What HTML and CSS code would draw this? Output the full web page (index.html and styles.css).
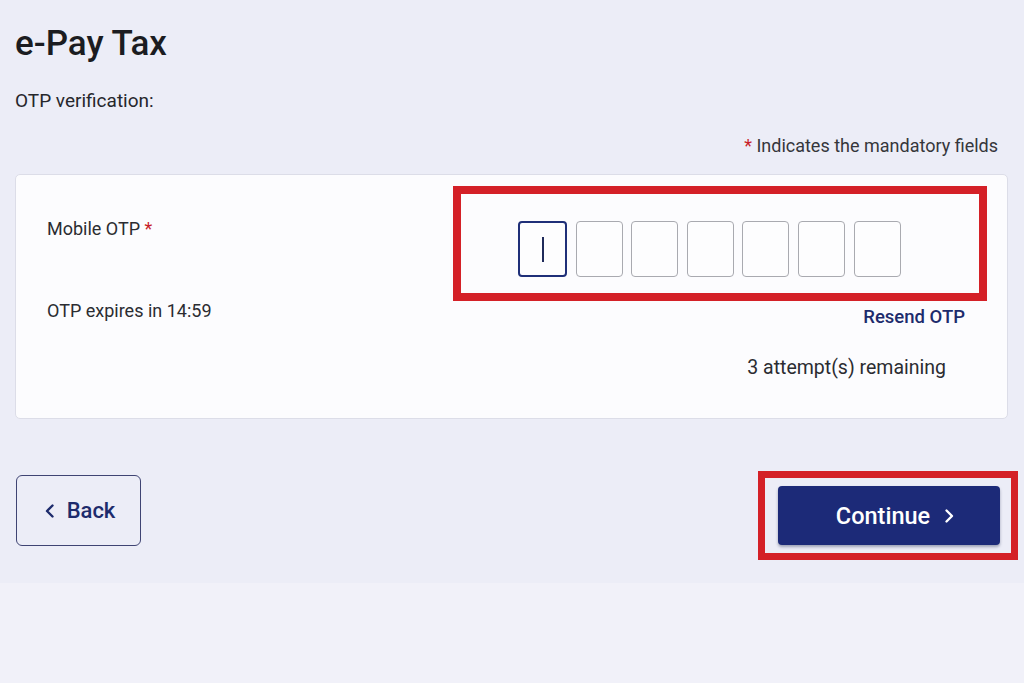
FILE: index.html
```html
<!DOCTYPE html>
<html lang="en">
<head>
<meta charset="utf-8">
<title>e-Pay Tax</title>
<link rel="stylesheet" href="styles.css">
</head>
<body>
<main class="page">
  <h1 class="title">e-Pay Tax</h1>
  <p class="subtitle">OTP verification:</p>
  <p class="mandatory"><span class="req">*</span> Indicates the mandatory fields</p>
  <section class="card">
    <div class="card-left">
      <div class="label">Mobile OTP <span class="req">*</span></div>
      <div class="expiry">OTP expires in 14:59</div>
    </div>
    <div class="card-right">
      <div class="highlight otp-highlight">
        <div class="otp-boxes">
          <div class="otp-box active"><span class="caret"></span></div>
          <div class="otp-box"></div>
          <div class="otp-box"></div>
          <div class="otp-box"></div>
          <div class="otp-box"></div>
          <div class="otp-box"></div>
          <div class="otp-box"></div>
        </div>
      </div>
      <a class="resend" href="#">Resend OTP</a>
      <div class="attempts">3 attempt(s) remaining</div>
    </div>
  </section>
  <div class="actions">
    <button class="btn-back" type="button">
      <svg class="chev" viewBox="0 0 12 16" width="12" height="16"><path d="M8.5 2.5 L3 8 L8.5 13.5" fill="none" stroke="currentColor" stroke-width="2.4" stroke-linecap="round" stroke-linejoin="round"/></svg>
      <span>Back</span>
    </button>
    <div class="highlight cont-highlight">
      <button class="btn-continue" type="button">
        <span>Continue</span>
        <svg class="chev" viewBox="0 0 12 16" width="12" height="16"><path d="M3.5 2.5 L9 8 L3.5 13.5" fill="none" stroke="currentColor" stroke-width="2.4" stroke-linecap="round" stroke-linejoin="round"/></svg>
      </button>
    </div>
  </div>
</main>
</body>
</html>
```

FILE: styles.css
```css
* { box-sizing: border-box; }
html, body { margin: 0; padding: 0; }
body {
  background: #f1f1f9;
  font-family: Roboto, "Liberation Sans", sans-serif;
  color: #2a2b30;
}
.page {
  background: #ecedf7;
  height: 583px;
  padding: 24px 6px 0 15px;
}
.title {
  margin: 0;
  font-size: 35px;
  font-weight: 500;
  line-height: 40px;
  color: #1b1c21;
}
.subtitle {
  margin: 26px 0 0;
  font-size: 19px;
  line-height: 22px;
  color: #26272c;
}
.mandatory {
  margin: 23px 20px 0 0;
  text-align: right;
  font-size: 18px;
  line-height: 22px;
  color: #35363b;
}
.req { color: #c81e2a; }
.card {
  margin: 17px 10px 0 0;
  height: 245px;
  background: #fcfcfe;
  border: 1px solid #dcdde8;
  border-radius: 5px;
  display: flex;
  justify-content: space-between;
}
.card-left {
  padding: 43px 0 0 31px;
  display: flex;
  flex-direction: column;
  gap: 60px;
  font-size: 18px;
  line-height: 22px;
  color: #2b2c31;
}
.card-right {
  padding: 11px 20px 0 0;
  display: flex;
  flex-direction: column;
  align-items: flex-end;
}
.highlight {
  border: 8px solid #d42027;
}
.otp-highlight {
  width: 534px;
  height: 115px;
  padding: 27px 0 0 57px;
}
.otp-boxes {
  display: flex;
  gap: 8.6px;
}
.otp-box {
  width: 47px;
  height: 56px;
  border: 1px solid #a9aab0;
  border-radius: 4px;
  background: #fdfdfe;
  display: flex;
  align-items: center;
  justify-content: center;
}
.otp-box.active {
  width: 49px;
  border: 2px solid #1f2f78;
}
.caret {
  width: 2px;
  height: 25px;
  background: #1f2a5a;
}
.resend {
  margin: 5px 22px 0 0;
  font-size: 18.5px;
  line-height: 22px;
  font-weight: 500;
  color: #1d2b6c;
  text-decoration: none;
}
.attempts {
  margin: 28px 41px 0 0;
  font-size: 19.5px;
  line-height: 24px;
  color: #2b2c31;
}
.actions {
  margin-top: 52px;
  display: flex;
  justify-content: space-between;
  align-items: flex-start;
}
.btn-back {
  margin: 4px 0 0 1px;
  width: 125px;
  height: 71px;
  background: transparent;
  border: 1px solid #3f4473;
  border-radius: 6px;
  color: #1d2b6c;
  font-family: inherit;
  font-size: 22px;
  font-weight: 500;
  display: flex;
  align-items: center;
  justify-content: center;
  gap: 11px;
  padding: 0 0 0 2px;
}
.chev { display: block; }
.cont-highlight {
  width: 260px;
  height: 89px;
  border-width: 7px;
  padding: 8px 11px 0 13px;
}
.btn-continue {
  width: 222px;
  height: 59px;
  background: #1c2a78;
  border: none;
  border-radius: 4px;
  box-shadow: 0 2px 3px rgba(10, 20, 60, 0.35);
  color: #ffffff;
  font-family: inherit;
  font-size: 23.5px;
  font-weight: 500;
  display: flex;
  align-items: center;
  justify-content: center;
  gap: 13px;
  padding: 0 0 0 13px;
}
```
